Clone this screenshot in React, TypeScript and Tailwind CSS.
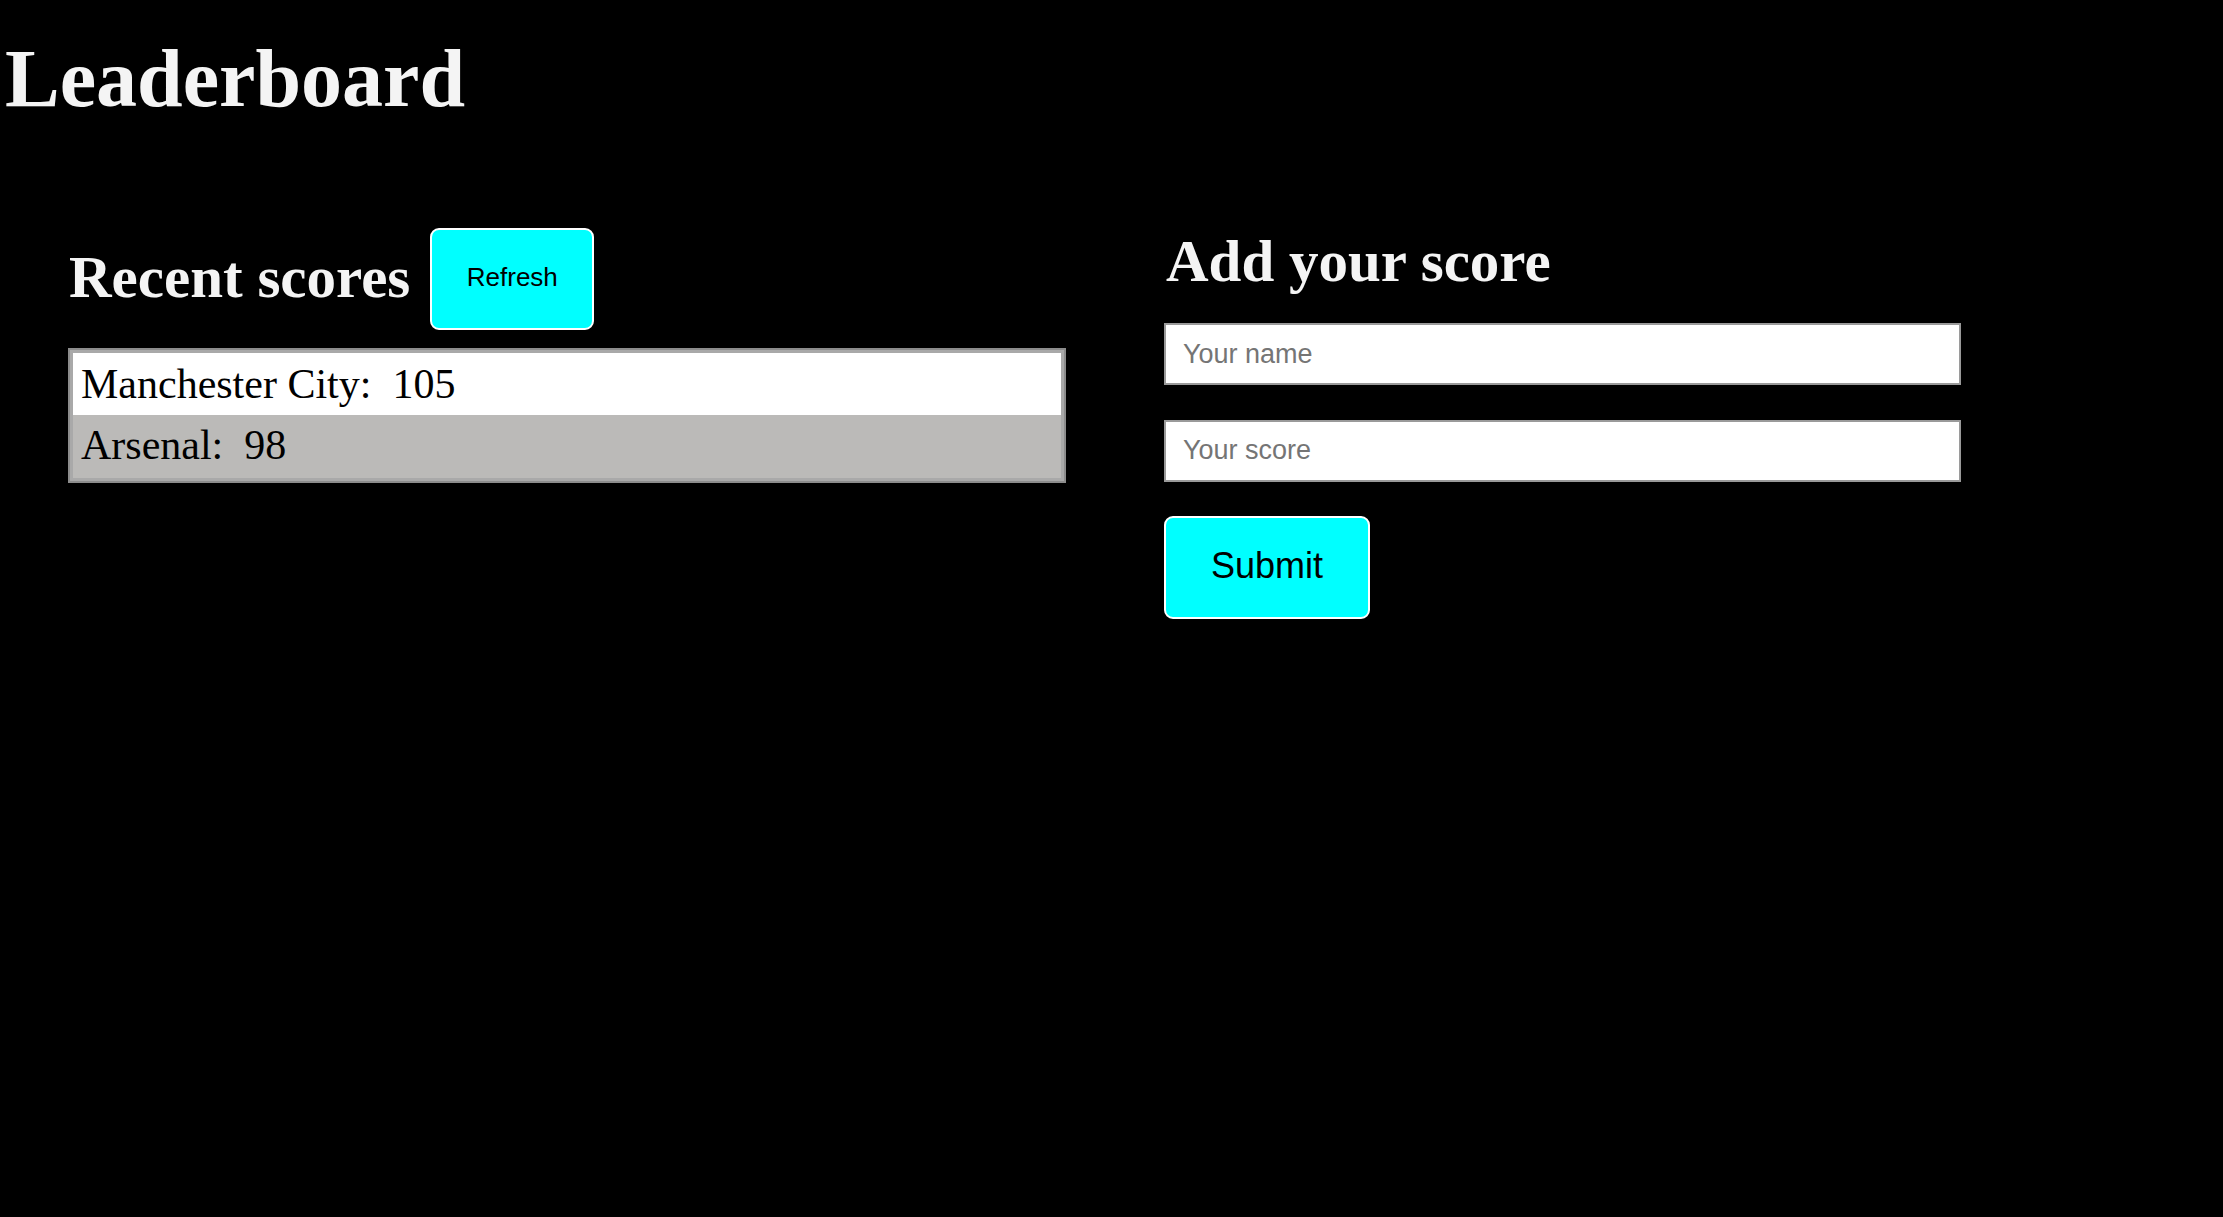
import React from "react";

export default function App() {
  const scores = [
    { name: "Manchester City", score: 105 },
    { name: "Arsenal", score: 98 },
  ];
  return (
    <div className="w-[2223px] min-h-[1217px] bg-black pt-[38px] font-['Liberation_Serif',serif]">
      <h1 className="ml-[5px] text-[82px] leading-[82px] font-bold text-[#f4f4f4]">Leaderboard</h1>
      <div className="mt-[108px] flex items-start pl-[69px]">
        <div className="w-[997px] flex flex-col">
          <div className="flex items-start h-[102px]">
            <h2 className="mt-[20px] text-[59px] leading-[59px] font-bold text-[#f4f4f4]">Recent scores</h2>
            <button className="ml-[20px] w-[164px] h-[102px] pb-[3px] rounded-[9px] border-2 border-white bg-[#00ffff] text-black text-[26px] font-['Liberation_Sans',Arial,sans-serif]">
              Refresh
            </button>
          </div>
          <div className="mt-[18px] -ml-px border-2 border-[#8c8c8c]">
            <div className="border-[3px] border-[#a9a9a9]">
              {scores.map((s, i) => (
                <div
                  key={s.name}
                  className={
                    i % 2 === 0
                      ? "h-[62px] leading-[62px] bg-white pl-[8px] text-[42px] text-black whitespace-pre"
                      : "h-[63px] leading-[61px] bg-[#bbbab8] pl-[8px] text-[42px] text-black whitespace-pre"
                  }
                >
                  {`${s.name}:  ${s.score}`}
                </div>
              ))}
            </div>
          </div>
        </div>
        <div className="ml-[98px] w-[797px] flex flex-col items-start">
          <h2 className="mt-[4px] ml-[2px] text-[59px] leading-[59px] font-bold text-[#f4f4f4]">Add your score</h2>
          <input
            type="text"
            placeholder="Your name"
            className="mt-[32px] w-full h-[62px] border-2 border-[#9a9a9a] bg-white px-[17px] text-[27px] text-black placeholder:text-[#757575] font-['Liberation_Sans',Arial,sans-serif] outline-none"
          />
          <input
            type="text"
            placeholder="Your score"
            className="mt-[35px] w-full h-[62px] border-2 border-[#9a9a9a] bg-white px-[17px] pb-[2px] text-[27px] text-black placeholder:text-[#757575] font-['Liberation_Sans',Arial,sans-serif] outline-none"
          />
          <button className="mt-[34px] w-[206px] h-[103px] pb-[4px] rounded-[9px] border-2 border-white bg-[#00ffff] text-black text-[36px] font-['Liberation_Sans',Arial,sans-serif]">
            Submit
          </button>
        </div>
      </div>
    </div>
  );
}
